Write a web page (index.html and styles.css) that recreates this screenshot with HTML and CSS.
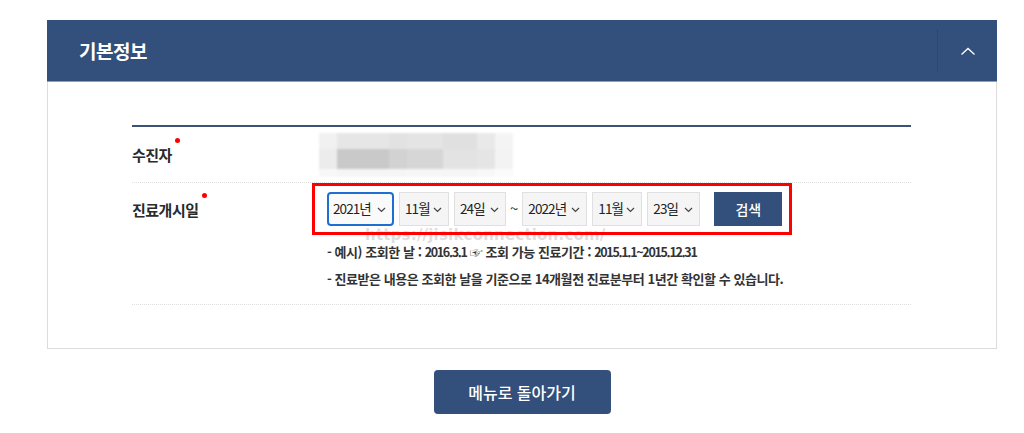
FILE: index.html
```html
<!DOCTYPE html>
<html lang="ko">
<head>
  <meta charset="UTF-8">
  <link rel="stylesheet" href="styles.css">
  <title>기본정보</title>
</head>
<body>
  <div class="page">
    <div class="card">
      <div class="card-head">
        <h2>기본정보</h2>
        <div class="fold">
          <svg width="16" height="10" viewBox="0 0 16 10"><path d="M1.5 8.5 L8 2.5 L14.5 8.5" fill="none" stroke="#fff" stroke-width="1.3"/></svg>
        </div>
      </div>

      <div class="card-body">
        <div class="form">
          <div class="row">
            <div class="label">수진자<i class="req"></i></div>
            <div class="value">
              <div class="blur">
                <span style="background:#f1f1f1"></span><span style="background:#e6e6e6"></span><span style="background:#e2e2e2"></span><span style="background:#e4e4e4"></span><span style="background:#e0e0e0"></span><span style="background:#e9e9e9"></span><span style="background:#f4f4f4"></span>
                <span style="background:#ececec"></span><span style="background:#c9c9c9"></span><span style="background:#d2d2d2"></span><span style="background:#d6d6d6"></span><span style="background:#e3e3e3"></span><span style="background:#e5e5e5"></span><span style="background:#f3f3f3"></span>
                <span style="background:#f8f8f8"></span><span style="background:#f6f6f6"></span><span style="background:#f6f6f6"></span><span style="background:#f7f7f7"></span><span style="background:#f6f6f6"></span><span style="background:#f8f8f8"></span><span style="background:#fbfbfb"></span>
              </div>
            </div>
          </div>

          <div class="row">
            <div class="label">진료개시일<i class="req"></i></div>
            <div class="value">
              <span class="mark">https://jisikconnection.com/</span>
              <div class="pick">
                <div class="sel on w67">2021년<svg width="9" height="6" viewBox="0 0 9 6"><path d="M1 1 L4.5 4.5 L8 1" fill="none" stroke="#444" stroke-width="1.2"/></svg></div>
                <div class="sel w50">11월<svg width="9" height="6" viewBox="0 0 9 6"><path d="M1 1 L4.5 4.5 L8 1" fill="none" stroke="#444" stroke-width="1.2"/></svg></div>
                <div class="sel w52">24일<svg width="9" height="6" viewBox="0 0 9 6"><path d="M1 1 L4.5 4.5 L8 1" fill="none" stroke="#444" stroke-width="1.2"/></svg></div>
                <span class="tilde">~</span>
                <div class="sel w65">2022년<svg width="9" height="6" viewBox="0 0 9 6"><path d="M1 1 L4.5 4.5 L8 1" fill="none" stroke="#444" stroke-width="1.2"/></svg></div>
                <div class="sel w50">11월<svg width="9" height="6" viewBox="0 0 9 6"><path d="M1 1 L4.5 4.5 L8 1" fill="none" stroke="#444" stroke-width="1.2"/></svg></div>
                <div class="sel w53">23일<svg width="9" height="6" viewBox="0 0 9 6"><path d="M1 1 L4.5 4.5 L8 1" fill="none" stroke="#444" stroke-width="1.2"/></svg></div>
                <button class="search" type="button">검색</button>
              </div>
              <ul class="notes">
                <li>- 예시) 조회한 날 : <span class="num">2016.3.1</span> ☞ 조회 가능 진료기간 : <span class="num">2015.1.1~2015.12.31</span></li>
                <li>- 진료받은 내용은 조회한 날을 기준으로 14개월전 진료분부터 1년간 확인할 수 있습니다.</li>
              </ul>
            </div>
          </div>
        </div>
      </div>
    </div>

    <div class="bottom">
      <button class="back" type="button">메뉴로 돌아가기</button>
    </div>
  </div>
</body>
</html>
```

FILE: styles.css
```css
body {
  margin: 0;
  background: #fff;
  font-family: "Noto Sans CJK KR", "Noto Sans", sans-serif;
  color: #222;
}
.page {
  width: 950px;
  margin-left: 47px;
  padding-top: 20px;
}
.card {
  border: 1px solid #dcdcdc;
  border-top: 0;
}
.card-head {
  display: flex;
  align-items: center;
  height: 62px;
  margin: 0 -1px;
  background: #334f7b;
  border-bottom: 1px solid #8fa0b8;
  box-sizing: border-box;
}
.card-head h2 {
  flex: 1;
  margin: 0;
  padding-left: 32px;
  font-size: 19px;
  font-weight: 700;
  color: #fff;
  letter-spacing: -0.5px;
}
.fold {
  width: 59px;
  height: 42px;
  border-left: 1px dotted #2a4168;
  display: flex;
  align-items: center;
  justify-content: center;
}
.card-body {
  padding: 43px 85px 43px 84px;
}
.form {
  border-top: 2px solid #3b5176;
}
.row {
  display: flex;
  border-bottom: 1px dotted #dedede;
}
.row:first-child {
  height: 55px;
  align-items: center;
}
.label {
  width: 180px;
  font-size: 15px;
  font-weight: 700;
  color: #2a2a2a;
  letter-spacing: -0.5px;
}
.row:nth-child(2) .label {
  padding-top: 16px;
}
.req {
  display: inline-block;
  width: 5px;
  height: 5px;
  border-radius: 50%;
  background: #f00;
  vertical-align: top;
  margin: -6px 0 0 3px;
}
.value {
  flex: 1;
  position: relative;
}
.blur {
  display: grid;
  grid-template-columns: 18px 52px 18px 36px 34px 18px 18px;
  grid-template-rows: 16px 20px 8px;
  width: 174px;
  margin-left: 7px;
  filter: blur(1px);
}
.pick {
  position: relative;
  display: flex;
  align-items: center;
  gap: 5px;
  width: 480px;
  height: 52px;
  box-sizing: border-box;
  border: 3px solid #f00;
  padding-left: 12px;
}
.sel {
  display: flex;
  align-items: center;
  justify-content: space-between;
  height: 34px;
  box-sizing: border-box;
  padding: 0 6px 2px 5px;
  background: #f5f5f5;
  border: 1px solid #e0e0e0;
  font-size: 13.5px;
  color: #222;
  letter-spacing: -0.9px;
  white-space: nowrap;
}
.sel svg {
  flex: none;
  margin-top: 3px;
}
.sel.on {
  border: 2px solid #1f6fd0;
  border-radius: 4px;
  padding-left: 4px;
  background: #fafafa;
}
.w67 { width: 67px; }
.w65 { width: 65px; }
.w50 { width: 50px; }
.w52 { width: 52px; }
.w53 { width: 53px; }
.tilde {
  font-size: 15px;
  color: #333;
  margin: -3px -1px 0;
}
.search {
  margin-left: 9px;
  width: 68px;
  height: 34px;
  border: 0;
  background: #334f7b;
  color: #fff;
  font-family: inherit;
  font-size: 14px;
  font-weight: 500;
}
.mark {
  position: absolute;
  left: 53px;
  top: 45px;
  font-family: "DejaVu Sans", sans-serif;
  font-size: 15px;
  font-weight: 700;
  color: rgba(200, 200, 200, 0.6);
  letter-spacing: 0.2px;
  line-height: 15px;
}
.notes {
  list-style: none;
  margin: 0;
  padding: 3px 0 12px 15px;
}
.notes li {
  font-size: 13px;
  font-weight: 700;
  color: #333;
  letter-spacing: -0.45px;
  line-height: 27px;
}
.num {
  font-size: 12.5px;
  letter-spacing: -1.3px;
}
.bottom {
  display: flex;
  justify-content: center;
  padding-top: 21px;
}
.back {
  width: 177px;
  height: 44px;
  border: 0;
  border-radius: 4px;
  background: #334f7b;
  color: #fff;
  font-family: inherit;
  font-size: 16px;
  font-weight: 500;
}
```
